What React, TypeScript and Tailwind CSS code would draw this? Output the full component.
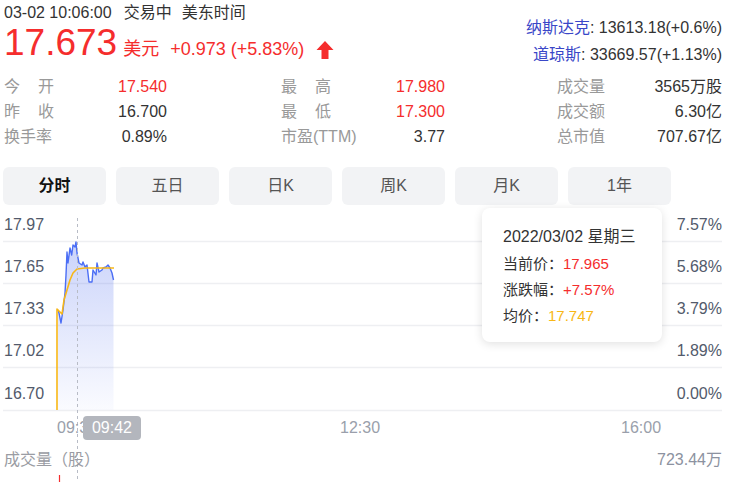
const font = { fontFamily: '"Liberation Sans", Arial, "Noto Sans CJK SC", sans-serif' };

const blueLine: [number, number][] = [
  [58, 102], [59, 105], [61, 115], [63, 102], [65, 85], [66, 67], [67, 44], [68, 55],
  [70, 40], [71.7, 47], [73, 37], [75, 39], [76, 34], [77, 45], [79, 55], [82, 57],
  [83, 54], [85, 59], [87, 57], [89, 74], [92, 74], [93, 62], [96, 67], [97, 55],
  [99, 64], [102, 62], [103, 60], [106, 59], [108, 57], [110, 60], [112, 65], [113.5, 72],
];

const avgLine: [number, number][] = [
  [57, 202], [57, 101], [60, 104], [62, 106], [64, 92], [67, 82], [70, 72], [73, 65],
  [77, 61], [85, 60], [114, 60],
];

const toPts = (p: [number, number][]) => p.map(([x, y]) => `${x},${y}`).join(' ');

const stats = [
  [
    { label: ['今', '开'], value: '17.540', red: true },
    { label: ['昨', '收'], value: '16.700', red: false },
    { label: ['换手率'], value: '0.89%', red: false },
  ],
  [
    { label: ['最', '高'], value: '17.980', red: true },
    { label: ['最', '低'], value: '17.300', red: true },
    { label: ['市盈(TTM)'], value: '3.77', red: false },
  ],
  [
    { label: ['成交量'], value: '3565万股', red: false },
    { label: ['成交额'], value: '6.30亿', red: false },
    { label: ['总市值'], value: '707.67亿', red: false },
  ],
];

const tabs = ['分时', '五日', '日K', '周K', '月K', '1年'];

const grid = [33, 75, 117, 159, 202];
const leftLabels = ['17.97', '17.65', '17.33', '17.02', '16.70'];
const rightLabels = ['7.57%', '5.68%', '3.79%', '1.89%', '0.00%'];

export default function App() {
  return (
    <div className="w-[744px] h-[482px] bg-white overflow-hidden text-[#333]" style={font}>
      {/* Header */}
      <div className="flex justify-between">
        <div className="pl-[4px]">
          <div className="text-[16px] leading-[20px] pt-[3px] text-[#333]">
            03-02 10:06:00<span className="ml-[12px]">交易中</span>
            <span className="ml-[10px]">美东时间</span>
          </div>
          <div className="flex items-end h-[40px]">
            <span className="text-[37px] leading-[40px] text-[#f52d2d]">17.673</span>
            <span className="text-[18px] leading-[20px] text-[#f52d2d] ml-[6px] mb-[4px]">美元</span>
            <span className="text-[18px] leading-[20px] text-[#f52d2d] ml-[11px] mb-[4px]">+0.973 (+5.83%)</span>
            <svg className="ml-[12px] mb-[3px]" width="18" height="20" viewBox="0 0 18 20">
              <path d="M9 1 L17.5 10 L12.5 10 L12.5 19 L5.5 19 L5.5 10 L0.5 10 Z" fill="#f52d2d" />
            </svg>
          </div>
        </div>
        <div className="pr-[22px] pt-[14px] text-right text-[16px] leading-[27px]">
          <div>
            <span className="text-[#3a47c8]">纳斯达克</span>: 13613.18(+0.6%)
          </div>
          <div>
            <span className="text-[#3a47c8]">道琼斯</span>: 33669.57(+1.13%)
          </div>
        </div>
      </div>

      {/* Stats */}
      <div className="flex pl-[4px] pt-[6px] text-[16px] leading-[25px]">
        {stats.map((col, ci) => (
          <div
            key={ci}
            className={
              ci === 0 ? 'w-[163px]' : ci === 1 ? 'w-[164px] ml-[114px]' : 'w-[165px] ml-[112px]'
            }
          >
            {col.map((row, ri) => (
              <div key={ri} className="flex justify-between">
                <span
                  className={`text-[#999] flex ${row.label.length === 2 ? 'w-[50px] justify-between' : ''}`}
                >
                  {row.label.map((l) => (
                    <span key={l}>{l}</span>
                  ))}
                </span>
                <span className={row.red ? 'text-[#f52d2d]' : 'text-[#333]'}>{row.value}</span>
              </div>
            ))}
          </div>
        ))}
      </div>

      {/* Tabs */}
      <div className="flex gap-[10px] pl-[3px] pt-[18px]">
        {tabs.map((t, i) => (
          <div
            key={t}
            className={`w-[103px] h-[38px] rounded-[6px] bg-[#f2f3f5] flex items-center justify-center text-[16px] ${
              i === 0 ? 'font-bold text-[#111]' : 'text-[#555]'
            }`}
          >
            {t}
          </div>
        ))}
      </div>

      {/* Chart */}
      <div className="relative h-[274px] mt-[3px]">
        <svg className="absolute inset-0" width="744" height="274" viewBox="0 0 744 274">
          <defs>
            <linearGradient id="fillGrad" x1="0" y1="0" x2="0" y2="1">
              <stop offset="0%" stopColor="#5b77f0" stopOpacity="0.32" />
              <stop offset="100%" stopColor="#5b77f0" stopOpacity="0.03" />
            </linearGradient>
          </defs>
          {grid.map((y) => (
            <line key={y} x1="3" x2="722" y1={y + 0.5} y2={y + 0.5} stroke="#eeeff2" strokeWidth="1.5" />
          ))}
          <polygon points={`58,202 ${toPts(blueLine)} 113.5,202`} fill="url(#fillGrad)" />
          <polyline points={toPts(blueLine)} fill="none" stroke="#4b6ef5" strokeWidth="1.4" strokeLinejoin="round" />
          <polyline points={toPts(avgLine)} fill="none" stroke="#f8b716" strokeWidth="1.6" strokeLinejoin="round" />
          <line x1="77.5" x2="77.5" y1="10" y2="274" stroke="#b8bcc6" strokeWidth="1" strokeDasharray="3 3" />
          <line x1="59.5" x2="59.5" y1="267" y2="274" stroke="#f52d2d" strokeWidth="1.2" />
        </svg>

        {leftLabels.map((l, i) => (
          <div
            key={l}
            className="absolute left-[4px] text-[16px] leading-[20px] text-[#525a6b]"
            style={{ top: grid[i] - 26 }}
          >
            {l}
          </div>
        ))}
        {rightLabels.map((l, i) => (
          <div
            key={l}
            className="absolute right-[22px] text-[16px] leading-[20px] text-[#525a6b]"
            style={{ top: grid[i] - 26 }}
          >
            {l}
          </div>
        ))}

        {/* Time axis */}
        <div className="absolute left-[57px] top-[210px] text-[16px] leading-[20px] text-[#9a9fab]">09:30</div>
        <div className="absolute left-[340px] top-[210px] text-[16px] leading-[20px] text-[#9a9fab]">12:30</div>
        <div className="absolute left-[621px] top-[210px] text-[16px] leading-[20px] text-[#9a9fab]">16:00</div>
        <div className="absolute left-[83px] top-[208px] w-[58px] h-[24px] rounded-[4px] bg-[#b3b6bd] text-white text-[16px] flex items-center justify-center">
          09:42
        </div>

        <div className="absolute left-[4px] top-[242px] text-[16px] leading-[20px] text-[#9a9ca3]">成交量（股）</div>
        <div className="absolute right-[22px] top-[242px] text-[16px] leading-[20px] text-[#8c92a0]">723.44万</div>

        {/* Tooltip */}
        <div className="absolute left-[482px] top-[0px] w-[180px] h-[134px] bg-white rounded-[8px] shadow-[0_2px_10px_rgba(0,0,0,0.12)] pl-[21px] pt-[19px]">
          <div className="text-[16px] leading-[20px] text-[#333]">2022/03/02 星期三</div>
          <div className="text-[15px] leading-[26px] mt-[4px] text-[#333]">
            <div>
              当前价：<span className="text-[#f52d2d]">17.965</span>
            </div>
            <div>
              涨跌幅：<span className="text-[#f52d2d]">+7.57%</span>
            </div>
            <div>
              均价：<span className="text-[#f8b716]">17.747</span>
            </div>
          </div>
        </div>
      </div>
    </div>
  );
}
